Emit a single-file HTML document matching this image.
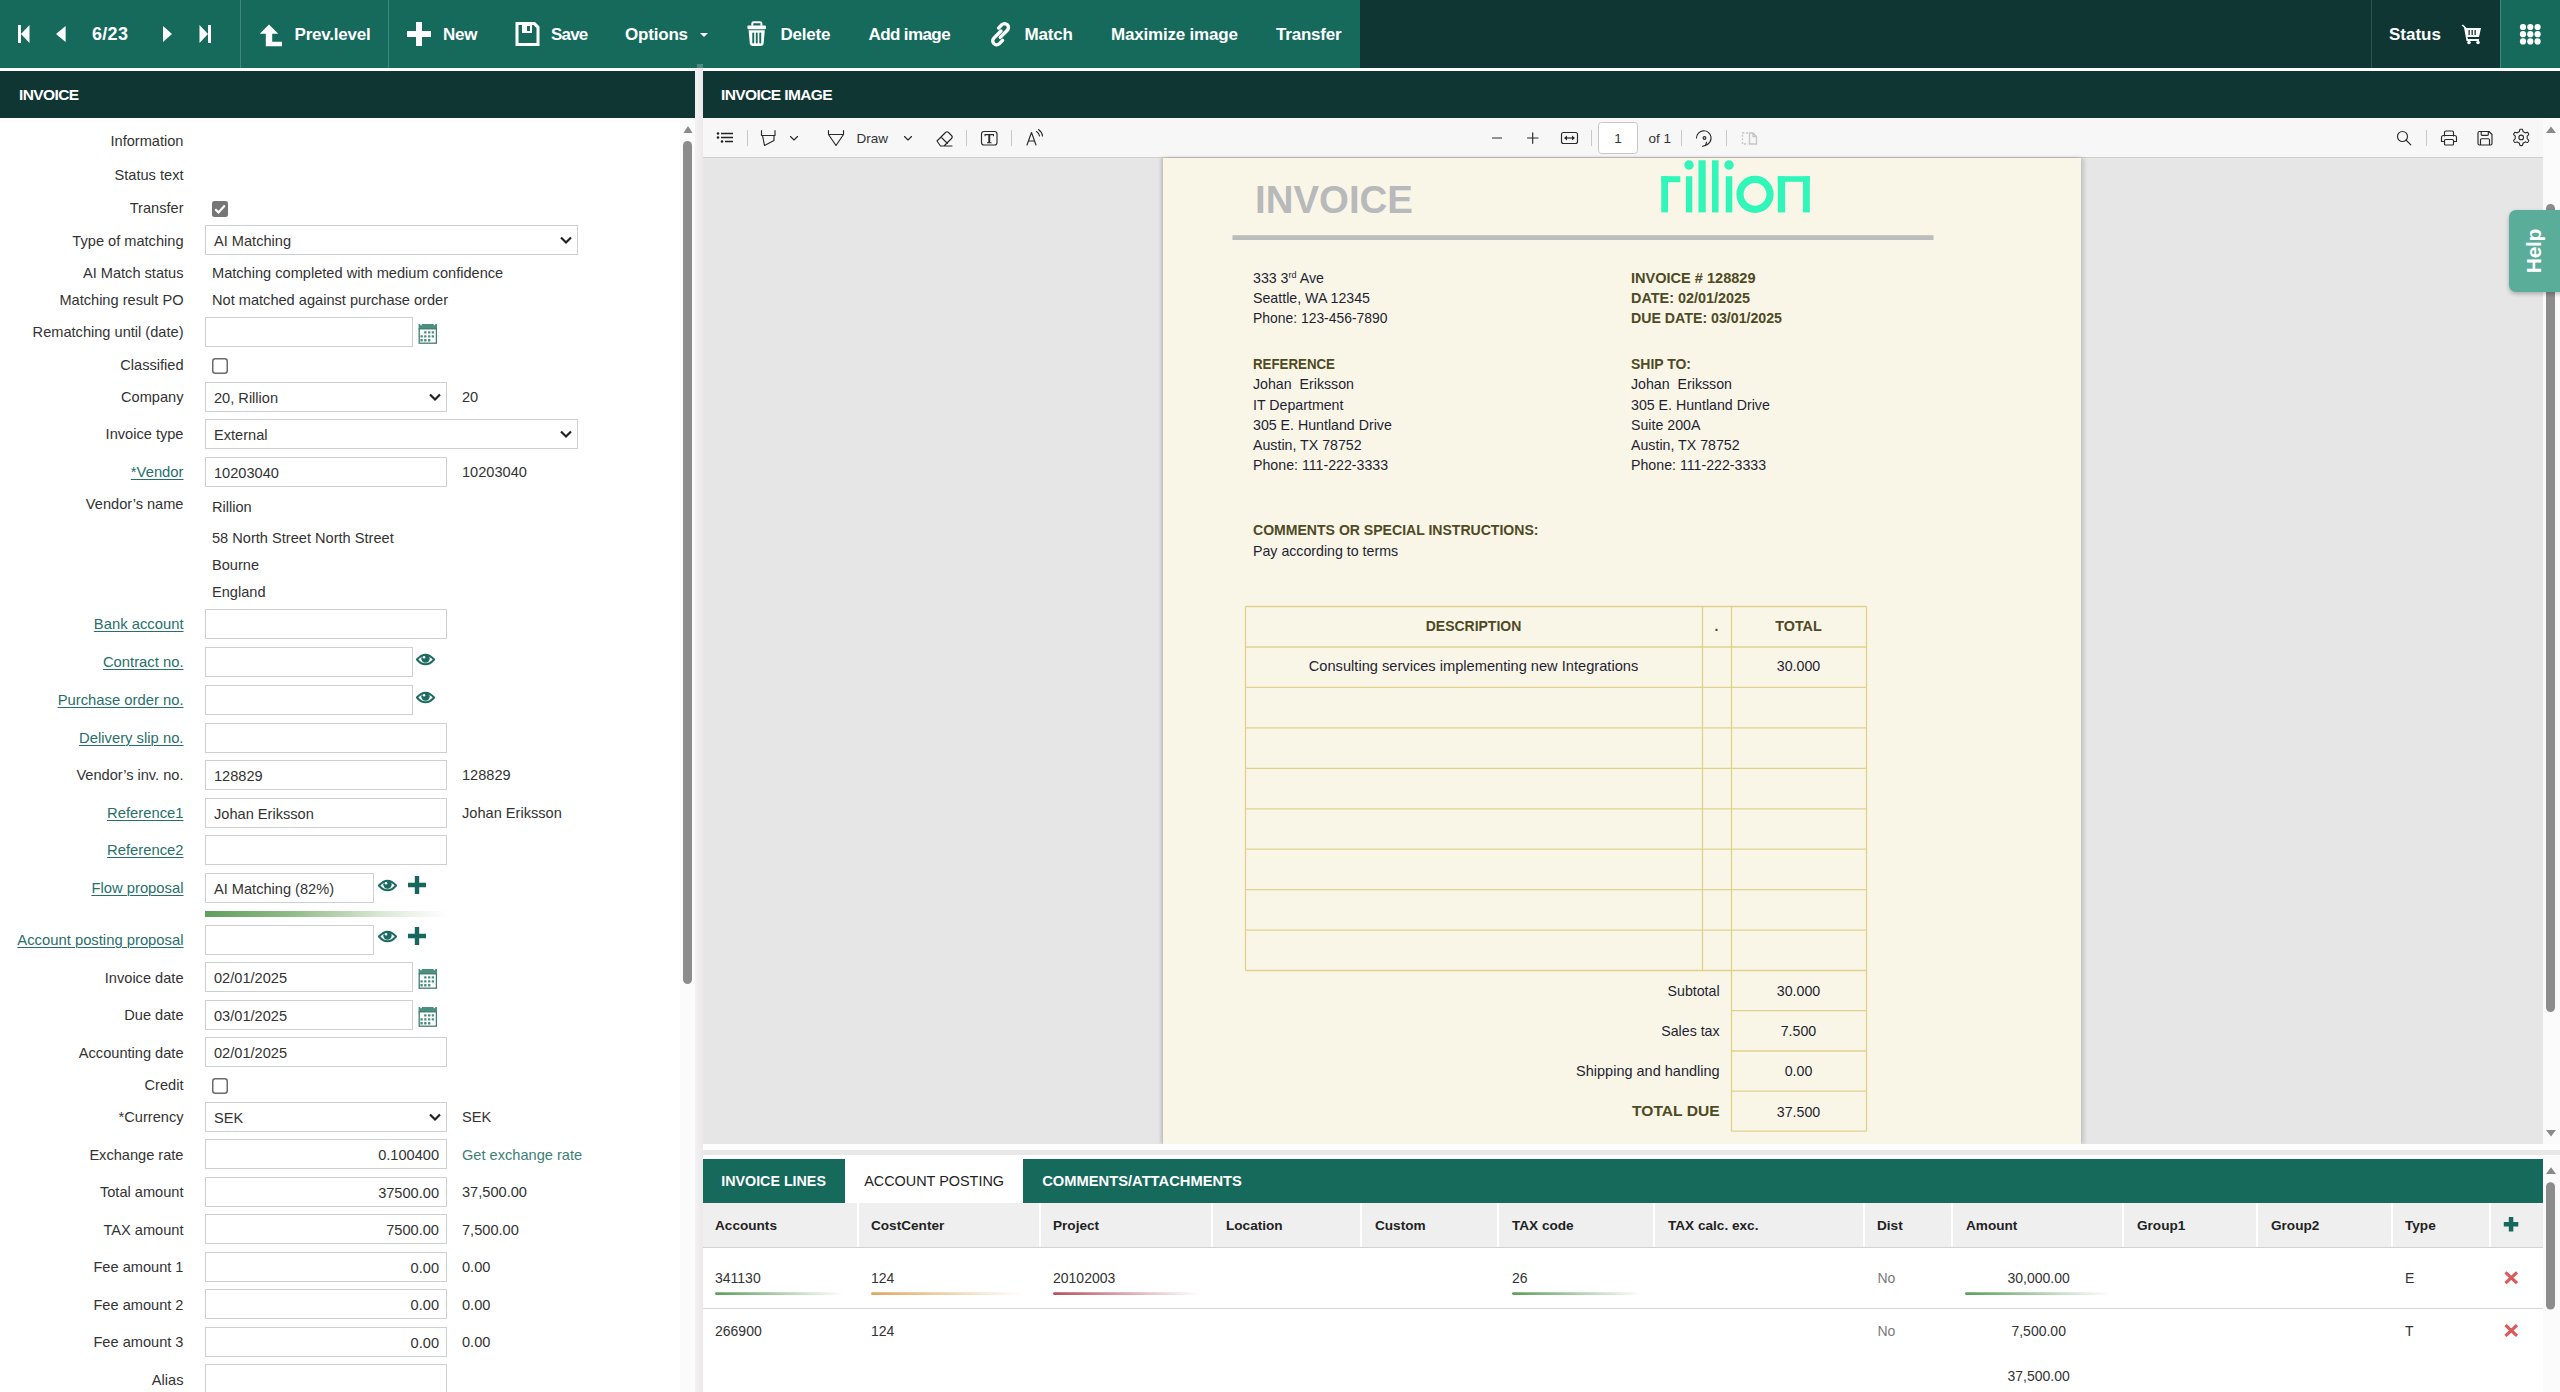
<!DOCTYPE html><html><head><meta charset="utf-8"><style>
*{box-sizing:border-box;margin:0;padding:0}
html,body{width:2560px;height:1392px;overflow:hidden;background:#fff;font-family:"Liberation Sans",sans-serif;color:#333}
.a{position:absolute}
.t{line-height:20px;white-space:nowrap}
.lk{text-decoration:underline;text-underline-offset:2px;text-decoration-thickness:1px}
.inp{background:#fff;border:1px solid #cdd0d2}
</style></head><body>
<div class="a" style="left:0px;top:0px;width:1360px;height:68px;background:#166a5c"></div>
<div class="a" style="left:1360px;top:0px;width:1200px;height:68px;background:#103634"></div>
<div class="a" style="left:2500px;top:0px;width:60px;height:68px;background:#166a5c"></div>
<!-- TOOLBAR -->
<svg class="a" style="left:0;top:0" width="1360" height="68" viewBox="0 0 1360 68">
<g fill="#fff">
<rect x="18" y="25" width="3" height="18"/><path d="M29.5 25 L21 34 L29.5 43Z"/>
<path d="M65.6 26 L56 34 L65.6 42Z"/>
<path d="M163 26 L172 34 L163 42Z"/>
<path d="M199.5 25 L208 34 L199.5 43Z"/><rect x="208" y="25" width="3" height="18"/>
<path d="M269 24.5 L259.8 33.8 L265.8 33.8 L265.8 46.2 L282 46.2 L282 41.8 L272.2 41.8 L272.2 33.8 L278.2 33.8Z"/>
<path d="M416 22 H422 V31 H431 V37 H422 V46 H416 V37 H407 V31 H416Z"/>
<path d="M515.5 22 H535 L539.5 26.5 V46 H515.5Z M518.5 25 V43 H536.5 V28 L533.5 25 H532 V33 H522 V25Z M527 26 H530 V31 H527Z" fill-rule="evenodd"/>
<path d="M700 33 H708 L704 37Z"/>
<path d="M752.3 25.8V23.6Q752.3 22.2 753.7 22.2H760Q761.4 22.2 761.4 23.6V25.8" fill="none" stroke="#fff" stroke-width="2"/>
<rect x="747.4" y="25.4" width="18.6" height="3.8" rx="1.2"/>
<path d="M748.6 30.2H764.8L763.6 43.6Q763.4 46 761 46H752.4Q750 46 749.8 43.6Z"/>
<g fill="#166a5c"><rect x="752.3" y="32.6" width="1.9" height="10.8" rx="0.9"/><rect x="755.8" y="32.6" width="1.9" height="10.8" rx="0.9"/><rect x="759.3" y="32.6" width="1.9" height="10.8" rx="0.9"/></g>
</g>
<g fill="none" stroke="#fff" stroke-width="3.4" stroke-linecap="round" transform="translate(1000.6 34.2) rotate(-45)">
<path d="M2.5 -2 H-7.5 A3.9 3.9 0 0 0 -7.5 5.8 H-3"/>
<path d="M-2.5 2 H7.5 A3.9 3.9 0 0 0 7.5 -5.8 H3"/>
</g>
<rect x="240" y="0" width="1" height="68" fill="#3f8a7d"/>
<rect x="388" y="0" width="1" height="68" fill="#3f8a7d"/>
<g fill="#fff" font-family="Liberation Sans" font-weight="bold" font-size="17" letter-spacing="-0.2">
<text x="92" y="39.8" font-size="18" letter-spacing="0.3">6/23</text>
<text x="294.5" y="39.8">Prev.level</text>
<text x="443" y="39.8">New</text>
<text x="551" y="39.8" letter-spacing="-0.8">Save</text>
<text x="625" y="39.8">Options</text>
<text x="780.5" y="39.8">Delete</text>
<text x="868.5" y="39.8" letter-spacing="-0.6">Add image</text>
<text x="1024.5" y="39.8">Match</text>
<text x="1111" y="39.8">Maximize image</text>
<text x="1276" y="39.8">Transfer</text>
</g>
</svg>
<svg class="a" style="left:2360px;top:0" width="200" height="68" viewBox="2360 0 200 68">
<rect x="2371" y="0" width="1" height="68" fill="#2a5550"/>
<rect x="2500" y="0" width="1" height="68" fill="#3f8a7d"/>
<text x="2389" y="39.8" fill="#fff" font-family="Liberation Sans" font-weight="bold" font-size="17">Status</text>
<g fill="#fff">
<path d="M2461.5 25.5 L2463 24.5 L2466.5 28 H2481 L2479 37 H2467.5 L2468 39 H2479 V41 H2466.5 L2464 27.5Z"/>
<circle cx="2469" cy="42.5" r="1.8"/><circle cx="2478" cy="42.5" r="1.8"/>
</g>
<g fill="#103634"><rect x="2468.5" y="30" width="1.3" height="5"/><rect x="2471.5" y="30" width="1.3" height="5"/><rect x="2474.5" y="30" width="1.3" height="5"/></g>
<g fill="#fff">
<circle cx="2523" cy="27" r="3.1"/><circle cx="2530.3" cy="27" r="3.1"/><circle cx="2537.6" cy="27" r="3.1"/>
<circle cx="2523" cy="34.2" r="3.1"/><circle cx="2530.3" cy="34.2" r="3.1"/><circle cx="2537.6" cy="34.2" r="3.1"/>
<circle cx="2523" cy="41.4" r="3.1"/><circle cx="2530.3" cy="41.4" r="3.1"/><circle cx="2537.6" cy="41.4" r="3.1"/>
</g>
</svg>

<div class="a" style="left:0px;top:68px;width:2560px;height:3px;background:#fff"></div>
<div class="a" style="left:0px;top:71px;width:695px;height:47px;background:#103634"></div>
<div class="a" style="left:695px;top:68px;width:8px;height:1324px;background:linear-gradient(90deg,#f2f2f4,#ebe8e8)"></div>
<div class="a" style="left:697px;top:64px;width:6px;height:4px;background:#4f8a80"></div>
<div class="a" style="left:703px;top:71px;width:1857px;height:47px;background:#103634"></div>
<div class="a t " style="left:19px;top:84.8px;font-size:15.5px;color:#fff;font-weight:bold;letter-spacing:-0.6px">INVOICE</div>
<div class="a t " style="left:721px;top:84.8px;font-size:15.5px;color:#fff;font-weight:bold;letter-spacing:-0.6px">INVOICE IMAGE</div>
<div class="a t " style="right:2376.5px;text-align:right;top:130.8px;font-size:14.6px;color:#333;font-weight:normal;">Information</div>
<div class="a t " style="right:2376.5px;text-align:right;top:165px;font-size:14.6px;color:#333;font-weight:normal;">Status text</div>
<div class="a t " style="right:2376.5px;text-align:right;top:198px;font-size:14.6px;color:#333;font-weight:normal;">Transfer</div>
<svg class="a" style="left:212px;top:201px" width="16" height="16" viewBox="0 0 16 16"><rect x="0" y="0" width="16" height="16" rx="2.5" fill="#767676"/><path d="M3.2 8.2 L6.5 11.4 L12.8 4.5" fill="none" stroke="#fff" stroke-width="2.2"/></svg>
<div class="a t " style="right:2376.5px;text-align:right;top:231px;font-size:14.6px;color:#333;font-weight:normal;">Type of matching</div>
<div class="a" style="left:205px;top:225px;width:373px;height:30px;background:#fff;border:1px solid #cdd0d2"></div>
<div class="a t " style="left:214px;top:231px;font-size:14.6px;color:#333;font-weight:normal;">AI Matching</div>
<svg class="a" style="left:559px;top:235px" width="14" height="10" viewBox="0 0 14 10"><path d="M2 2.5 L7 7.5 L12 2.5" fill="none" stroke="#222" stroke-width="2.2"/></svg>
<div class="a t " style="right:2376.5px;text-align:right;top:263px;font-size:14.6px;color:#333;font-weight:normal;">AI Match status</div>
<div class="a t " style="left:212px;top:263px;font-size:14.6px;color:#333;font-weight:normal;">Matching completed with medium confidence</div>
<div class="a t " style="right:2376.5px;text-align:right;top:290px;font-size:14.6px;color:#333;font-weight:normal;">Matching result PO</div>
<div class="a t " style="left:212px;top:290px;font-size:14.6px;color:#333;font-weight:normal;">Not matched against purchase order</div>
<div class="a t " style="right:2376.5px;text-align:right;top:322px;font-size:14.6px;color:#333;font-weight:normal;">Rematching until (date)</div>
<div class="a" style="left:205px;top:317px;width:208px;height:30px;background:#fff;border:1px solid #cdd0d2"></div>
<svg class="a" style="left:418px;top:324px" width="20" height="21" viewBox="0 0 20 21">
<rect x="0.6" y="0" width="18.4" height="5.6" fill="#4a8f7f"/><rect x="2.2" y="0" width="1.6" height="1.2" fill="#fff"/><rect x="15.6" y="0" width="1.6" height="1.2" fill="#fff"/>
<rect x="1.2" y="4.8" width="17.2" height="14.4" fill="#fff" stroke="#3f7d6e" stroke-width="1.3"/>
<g fill="#4a8f7f"><rect x="6.1" y="7.2" width="2.4" height="2.4" rx="0.5"/><rect x="10.0" y="7.2" width="2.4" height="2.4" rx="0.5"/><rect x="13.7" y="7.2" width="2.4" height="2.4" rx="0.5"/><rect x="2.4" y="11.2" width="2.4" height="2.4" rx="0.5"/><rect x="6.1" y="11.2" width="2.4" height="2.4" rx="0.5"/><rect x="10.0" y="11.2" width="2.4" height="2.4" rx="0.5"/><rect x="13.7" y="11.2" width="2.4" height="2.4" rx="0.5"/><rect x="2.4" y="15.0" width="2.4" height="2.4" rx="0.5"/><rect x="6.1" y="15.0" width="2.4" height="2.4" rx="0.5"/><rect x="10.0" y="15.0" width="2.4" height="2.4" rx="0.5"/></g>
</svg>
<div class="a t " style="right:2376.5px;text-align:right;top:355px;font-size:14.6px;color:#333;font-weight:normal;">Classified</div>
<svg class="a" style="left:212px;top:358px" width="16" height="16" viewBox="0 0 16 16"><rect x="0.75" y="0.75" width="14.5" height="14.5" rx="2.5" fill="#fff" stroke="#6a6a6a" stroke-width="1.5"/></svg>
<div class="a t " style="right:2376.5px;text-align:right;top:387px;font-size:14.6px;color:#333;font-weight:normal;">Company</div>
<div class="a" style="left:205px;top:382px;width:242px;height:30px;background:#fff;border:1px solid #cdd0d2"></div>
<div class="a t " style="left:214px;top:388px;font-size:14.6px;color:#333;font-weight:normal;">20, Rillion</div>
<svg class="a" style="left:428px;top:392px" width="14" height="10" viewBox="0 0 14 10"><path d="M2 2.5 L7 7.5 L12 2.5" fill="none" stroke="#222" stroke-width="2.2"/></svg>
<div class="a t " style="left:462px;top:387px;font-size:14.6px;color:#333;font-weight:normal;">20</div>
<div class="a t " style="right:2376.5px;text-align:right;top:424px;font-size:14.6px;color:#333;font-weight:normal;">Invoice type</div>
<div class="a" style="left:205px;top:419px;width:373px;height:30px;background:#fff;border:1px solid #cdd0d2"></div>
<div class="a t " style="left:214px;top:425px;font-size:14.6px;color:#333;font-weight:normal;">External</div>
<svg class="a" style="left:559px;top:429px" width="14" height="10" viewBox="0 0 14 10"><path d="M2 2.5 L7 7.5 L12 2.5" fill="none" stroke="#222" stroke-width="2.2"/></svg>
<div class="a t lk" style="right:2376.5px;text-align:right;top:462px;font-size:14.8px;color:#27706a;font-weight:normal;">*Vendor</div>
<div class="a" style="left:205px;top:457px;width:242px;height:30px;background:#fff;border:1px solid #cdd0d2"></div>
<div class="a t " style="left:214px;top:463px;font-size:14.6px;color:#333;font-weight:normal;">10203040</div>
<div class="a t " style="left:462px;top:462px;font-size:14.6px;color:#333;font-weight:normal;">10203040</div>
<div class="a t " style="right:2376.5px;text-align:right;top:494px;font-size:14.6px;color:#333;font-weight:normal;">Vendor’s name</div>
<div class="a t " style="left:212px;top:497px;font-size:14.6px;color:#333;font-weight:normal;">Rillion</div>
<div class="a t " style="left:212px;top:528px;font-size:14.6px;color:#333;font-weight:normal;">58 North Street North Street</div>
<div class="a t " style="left:212px;top:555px;font-size:14.6px;color:#333;font-weight:normal;">Bourne</div>
<div class="a t " style="left:212px;top:582px;font-size:14.6px;color:#333;font-weight:normal;">England</div>
<div class="a t lk" style="right:2376.5px;text-align:right;top:614px;font-size:14.8px;color:#27706a;font-weight:normal;">Bank account</div>
<div class="a" style="left:205px;top:609px;width:242px;height:30px;background:#fff;border:1px solid #cdd0d2"></div>
<div class="a t lk" style="right:2376.5px;text-align:right;top:652px;font-size:14.8px;color:#27706a;font-weight:normal;">Contract no.</div>
<div class="a" style="left:205px;top:647px;width:208px;height:30px;background:#fff;border:1px solid #cdd0d2"></div>
<svg class="a" style="left:416px;top:653px" width="19" height="13" viewBox="0 0 19 13">
<path d="M0.9 6.5 Q9.5 -3.2 18.1 6.5 Q9.5 16.2 0.9 6.5Z" fill="none" stroke="#1d6a62" stroke-width="2"/>
<circle cx="9.5" cy="5.6" r="4.2" fill="#1d6a62"/><circle cx="8" cy="4.3" r="1.3" fill="#fff"/>
</svg>
<div class="a t lk" style="right:2376.5px;text-align:right;top:690px;font-size:14.8px;color:#27706a;font-weight:normal;">Purchase order no.</div>
<div class="a" style="left:205px;top:685px;width:208px;height:30px;background:#fff;border:1px solid #cdd0d2"></div>
<svg class="a" style="left:416px;top:691px" width="19" height="13" viewBox="0 0 19 13">
<path d="M0.9 6.5 Q9.5 -3.2 18.1 6.5 Q9.5 16.2 0.9 6.5Z" fill="none" stroke="#1d6a62" stroke-width="2"/>
<circle cx="9.5" cy="5.6" r="4.2" fill="#1d6a62"/><circle cx="8" cy="4.3" r="1.3" fill="#fff"/>
</svg>
<div class="a t lk" style="right:2376.5px;text-align:right;top:728px;font-size:14.8px;color:#27706a;font-weight:normal;">Delivery slip no.</div>
<div class="a" style="left:205px;top:723px;width:242px;height:30px;background:#fff;border:1px solid #cdd0d2"></div>
<div class="a t " style="right:2376.5px;text-align:right;top:765px;font-size:14.6px;color:#333;font-weight:normal;">Vendor’s inv. no.</div>
<div class="a" style="left:205px;top:760px;width:242px;height:30px;background:#fff;border:1px solid #cdd0d2"></div>
<div class="a t " style="left:214px;top:766px;font-size:14.6px;color:#333;font-weight:normal;">128829</div>
<div class="a t " style="left:462px;top:765px;font-size:14.6px;color:#333;font-weight:normal;">128829</div>
<div class="a t lk" style="right:2376.5px;text-align:right;top:803px;font-size:14.8px;color:#27706a;font-weight:normal;">Reference1</div>
<div class="a" style="left:205px;top:798px;width:242px;height:30px;background:#fff;border:1px solid #cdd0d2"></div>
<div class="a t " style="left:214px;top:804px;font-size:14.6px;color:#333;font-weight:normal;">Johan Eriksson</div>
<div class="a t " style="left:462px;top:803px;font-size:14.6px;color:#333;font-weight:normal;">Johan Eriksson</div>
<div class="a t lk" style="right:2376.5px;text-align:right;top:840px;font-size:14.8px;color:#27706a;font-weight:normal;">Reference2</div>
<div class="a" style="left:205px;top:835px;width:242px;height:30px;background:#fff;border:1px solid #cdd0d2"></div>
<div class="a t lk" style="right:2376.5px;text-align:right;top:878px;font-size:14.8px;color:#27706a;font-weight:normal;">Flow proposal</div>
<div class="a" style="left:205px;top:873px;width:169px;height:30px;background:#fff;border:1px solid #cdd0d2"></div>
<div class="a t " style="left:214px;top:879px;font-size:14.6px;color:#333;font-weight:normal;">AI Matching (82%)</div>
<svg class="a" style="left:378px;top:879px" width="19" height="13" viewBox="0 0 19 13">
<path d="M0.9 6.5 Q9.5 -3.2 18.1 6.5 Q9.5 16.2 0.9 6.5Z" fill="none" stroke="#1d6a62" stroke-width="2"/>
<circle cx="9.5" cy="5.6" r="4.2" fill="#1d6a62"/><circle cx="8" cy="4.3" r="1.3" fill="#fff"/>
</svg>
<svg class="a" style="left:408px;top:876px" width="18" height="18" viewBox="0 0 18 18"><path d="M6.8 0H11.2V6.8H18V11.2H11.2V18H6.8V11.2H0V6.8H6.8Z" fill="#17675d"/></svg>
<div class="a" style="left:205px;top:911px;width:243px;height:6px;background:linear-gradient(90deg,#5f9f5c 0%,#8fbb86 35%,#dfeadb 75%,rgba(255,255,255,0) 100%)"></div>
<div class="a t lk" style="right:2376.5px;text-align:right;top:929.5px;font-size:14.8px;color:#27706a;font-weight:normal;">Account posting proposal</div>
<div class="a" style="left:205px;top:925px;width:169px;height:30px;background:#fff;border:1px solid #cdd0d2"></div>
<svg class="a" style="left:378px;top:930px" width="19" height="13" viewBox="0 0 19 13">
<path d="M0.9 6.5 Q9.5 -3.2 18.1 6.5 Q9.5 16.2 0.9 6.5Z" fill="none" stroke="#1d6a62" stroke-width="2"/>
<circle cx="9.5" cy="5.6" r="4.2" fill="#1d6a62"/><circle cx="8" cy="4.3" r="1.3" fill="#fff"/>
</svg>
<svg class="a" style="left:408px;top:927px" width="18" height="18" viewBox="0 0 18 18"><path d="M6.8 0H11.2V6.8H18V11.2H11.2V18H6.8V11.2H0V6.8H6.8Z" fill="#17675d"/></svg>
<div class="a t " style="right:2376.5px;text-align:right;top:968px;font-size:14.6px;color:#333;font-weight:normal;">Invoice date</div>
<div class="a" style="left:205px;top:962px;width:208px;height:30px;background:#fff;border:1px solid #cdd0d2"></div>
<div class="a t " style="left:214px;top:968px;font-size:14.6px;color:#333;font-weight:normal;">02/01/2025</div>
<svg class="a" style="left:418px;top:969px" width="20" height="21" viewBox="0 0 20 21">
<rect x="0.6" y="0" width="18.4" height="5.6" fill="#4a8f7f"/><rect x="2.2" y="0" width="1.6" height="1.2" fill="#fff"/><rect x="15.6" y="0" width="1.6" height="1.2" fill="#fff"/>
<rect x="1.2" y="4.8" width="17.2" height="14.4" fill="#fff" stroke="#3f7d6e" stroke-width="1.3"/>
<g fill="#4a8f7f"><rect x="6.1" y="7.2" width="2.4" height="2.4" rx="0.5"/><rect x="10.0" y="7.2" width="2.4" height="2.4" rx="0.5"/><rect x="13.7" y="7.2" width="2.4" height="2.4" rx="0.5"/><rect x="2.4" y="11.2" width="2.4" height="2.4" rx="0.5"/><rect x="6.1" y="11.2" width="2.4" height="2.4" rx="0.5"/><rect x="10.0" y="11.2" width="2.4" height="2.4" rx="0.5"/><rect x="13.7" y="11.2" width="2.4" height="2.4" rx="0.5"/><rect x="2.4" y="15.0" width="2.4" height="2.4" rx="0.5"/><rect x="6.1" y="15.0" width="2.4" height="2.4" rx="0.5"/><rect x="10.0" y="15.0" width="2.4" height="2.4" rx="0.5"/></g>
</svg>
<div class="a t " style="right:2376.5px;text-align:right;top:1005px;font-size:14.6px;color:#333;font-weight:normal;">Due date</div>
<div class="a" style="left:205px;top:1000px;width:208px;height:30px;background:#fff;border:1px solid #cdd0d2"></div>
<div class="a t " style="left:214px;top:1006px;font-size:14.6px;color:#333;font-weight:normal;">03/01/2025</div>
<svg class="a" style="left:418px;top:1007px" width="20" height="21" viewBox="0 0 20 21">
<rect x="0.6" y="0" width="18.4" height="5.6" fill="#4a8f7f"/><rect x="2.2" y="0" width="1.6" height="1.2" fill="#fff"/><rect x="15.6" y="0" width="1.6" height="1.2" fill="#fff"/>
<rect x="1.2" y="4.8" width="17.2" height="14.4" fill="#fff" stroke="#3f7d6e" stroke-width="1.3"/>
<g fill="#4a8f7f"><rect x="6.1" y="7.2" width="2.4" height="2.4" rx="0.5"/><rect x="10.0" y="7.2" width="2.4" height="2.4" rx="0.5"/><rect x="13.7" y="7.2" width="2.4" height="2.4" rx="0.5"/><rect x="2.4" y="11.2" width="2.4" height="2.4" rx="0.5"/><rect x="6.1" y="11.2" width="2.4" height="2.4" rx="0.5"/><rect x="10.0" y="11.2" width="2.4" height="2.4" rx="0.5"/><rect x="13.7" y="11.2" width="2.4" height="2.4" rx="0.5"/><rect x="2.4" y="15.0" width="2.4" height="2.4" rx="0.5"/><rect x="6.1" y="15.0" width="2.4" height="2.4" rx="0.5"/><rect x="10.0" y="15.0" width="2.4" height="2.4" rx="0.5"/></g>
</svg>
<div class="a t " style="right:2376.5px;text-align:right;top:1043px;font-size:14.6px;color:#333;font-weight:normal;">Accounting date</div>
<div class="a" style="left:205px;top:1037px;width:242px;height:30px;background:#fff;border:1px solid #cdd0d2"></div>
<div class="a t " style="left:214px;top:1043px;font-size:14.6px;color:#333;font-weight:normal;">02/01/2025</div>
<div class="a t " style="right:2376.5px;text-align:right;top:1075px;font-size:14.6px;color:#333;font-weight:normal;">Credit</div>
<svg class="a" style="left:212px;top:1078px" width="16" height="16" viewBox="0 0 16 16"><rect x="0.75" y="0.75" width="14.5" height="14.5" rx="2.5" fill="#fff" stroke="#6a6a6a" stroke-width="1.5"/></svg>
<div class="a t " style="right:2376.5px;text-align:right;top:1107px;font-size:14.6px;color:#333;font-weight:normal;">*Currency</div>
<div class="a" style="left:205px;top:1102px;width:242px;height:30px;background:#fff;border:1px solid #cdd0d2"></div>
<div class="a t " style="left:214px;top:1108px;font-size:14.6px;color:#333;font-weight:normal;">SEK</div>
<svg class="a" style="left:428px;top:1112px" width="14" height="10" viewBox="0 0 14 10"><path d="M2 2.5 L7 7.5 L12 2.5" fill="none" stroke="#222" stroke-width="2.2"/></svg>
<div class="a t " style="left:462px;top:1107px;font-size:14.6px;color:#333;font-weight:normal;">SEK</div>
<div class="a t " style="right:2376.5px;text-align:right;top:1144.5px;font-size:14.6px;color:#333;font-weight:normal;">Exchange rate</div>
<div class="a" style="left:205px;top:1139px;width:242px;height:30px;background:#fff;border:1px solid #cdd0d2"></div>
<div class="a t " style="right:2121px;text-align:right;top:1145px;font-size:14.6px;color:#333;font-weight:normal;">0.100400</div>
<div class="a t " style="left:462px;top:1145px;font-size:14.6px;color:#3d7f76;font-weight:normal;">Get exchange rate</div>
<div class="a t " style="right:2376.5px;text-align:right;top:1181.5px;font-size:14.6px;color:#333;font-weight:normal;">Total amount</div>
<div class="a" style="left:205px;top:1177px;width:242px;height:30px;background:#fff;border:1px solid #cdd0d2"></div>
<div class="a t " style="right:2121px;text-align:right;top:1183px;font-size:14.6px;color:#333;font-weight:normal;">37500.00</div>
<div class="a t " style="left:462px;top:1182px;font-size:14.6px;color:#333;font-weight:normal;">37,500.00</div>
<div class="a t " style="right:2376.5px;text-align:right;top:1219.5px;font-size:14.6px;color:#333;font-weight:normal;">TAX amount</div>
<div class="a" style="left:205px;top:1214px;width:242px;height:30px;background:#fff;border:1px solid #cdd0d2"></div>
<div class="a t " style="right:2121px;text-align:right;top:1220px;font-size:14.6px;color:#333;font-weight:normal;">7500.00</div>
<div class="a t " style="left:462px;top:1220px;font-size:14.6px;color:#333;font-weight:normal;">7,500.00</div>
<div class="a t " style="right:2376.5px;text-align:right;top:1257px;font-size:14.6px;color:#333;font-weight:normal;">Fee amount 1</div>
<div class="a" style="left:205px;top:1252px;width:242px;height:30px;background:#fff;border:1px solid #cdd0d2"></div>
<div class="a t " style="right:2121px;text-align:right;top:1258px;font-size:14.6px;color:#333;font-weight:normal;">0.00</div>
<div class="a t " style="left:462px;top:1257px;font-size:14.6px;color:#333;font-weight:normal;">0.00</div>
<div class="a t " style="right:2376.5px;text-align:right;top:1295px;font-size:14.6px;color:#333;font-weight:normal;">Fee amount 2</div>
<div class="a" style="left:205px;top:1289px;width:242px;height:30px;background:#fff;border:1px solid #cdd0d2"></div>
<div class="a t " style="right:2121px;text-align:right;top:1295px;font-size:14.6px;color:#333;font-weight:normal;">0.00</div>
<div class="a t " style="left:462px;top:1295px;font-size:14.6px;color:#333;font-weight:normal;">0.00</div>
<div class="a t " style="right:2376.5px;text-align:right;top:1331.5px;font-size:14.6px;color:#333;font-weight:normal;">Fee amount 3</div>
<div class="a" style="left:205px;top:1327px;width:242px;height:30px;background:#fff;border:1px solid #cdd0d2"></div>
<div class="a t " style="right:2121px;text-align:right;top:1333px;font-size:14.6px;color:#333;font-weight:normal;">0.00</div>
<div class="a t " style="left:462px;top:1332px;font-size:14.6px;color:#333;font-weight:normal;">0.00</div>
<div class="a t " style="right:2376.5px;text-align:right;top:1369.5px;font-size:14.6px;color:#333;font-weight:normal;">Alias</div>
<div class="a" style="left:205px;top:1364px;width:242px;height:30px;background:#fff;border:1px solid #cdd0d2"></div>
<div class="a" style="left:680px;top:118px;width:15px;height:1274px;background:#fbfbfb"></div>
<svg class="a" style="left:683px;top:125px" width="10" height="9" viewBox="0 0 10 9"><path d="M0.5 8 L5 1 L9.5 8Z" fill="#8a8a8a"/></svg>
<div class="a" style="left:683px;top:141px;width:9px;height:843px;background:#8c8c8c;border-radius:5px"></div>
<div class="a" style="left:703px;top:118px;width:1840px;height:40px;background:#f7f7f7;border-bottom:1px solid #d2cfcb"></div>
<div class="a" style="left:703px;top:158px;width:1840px;height:986px;background:#e6e6e6"></div>
<div class="a" style="left:1163px;top:158px;width:918px;height:986px;background:#f9f6e7;box-shadow:-2px 0 3px rgba(0,0,0,.18),3px 0 4px rgba(0,0,0,.15)"></div>
<svg class="a" style="left:703px;top:118px" width="1840" height="40" viewBox="703 118 1840 40">
<g fill="#222">
<circle cx="718" cy="133.5" r="1.3"/><circle cx="718" cy="137.5" r="1.3"/><circle cx="722" cy="141.5" r="1.3"/>
</g>
<g stroke="#222" stroke-width="1.4" fill="none">
<path d="M721 133.5H733M721 137.5H733M725 141.5H733"/>
</g>
<g fill="#c8c8c8">
<rect x="747" y="130" width="1" height="16"/><rect x="966" y="130" width="1" height="16"/><rect x="1011" y="130" width="1" height="16"/>
<rect x="1591" y="130" width="1" height="16"/><rect x="1681" y="130" width="1" height="16"/><rect x="1726" y="130" width="1" height="16"/>
<rect x="2426" y="130" width="1" height="16"/>
</g>
<g stroke="#2a2a2a" stroke-width="1.15" fill="none" stroke-linejoin="round" stroke-linecap="round">
<!-- highlighter -->
<path d="M761.5 130.5V135.5H775V130.5M762.5 135.5L764.5 145.5L774 140.5V135.5"/>
<!-- chevrons -->
<path d="M790.5 136.5L794 140L797.5 136.5"/>
<path d="M904.5 136.5L908 140L911.5 136.5"/>
<!-- draw pen -->
<path d="M828.5 130.5V134.5M843.5 130.5V134.5M828.5 134.5H843.5L836 145.5Z"/>
<!-- eraser -->
<path d="M937 141L945.5 132.5Q947 131 948.5 132.5L951.5 135.5Q953 137 951.5 138.5L944 146H940.5Z M941 137L947.5 143.5 M940.5 146H952"/>
<!-- T box -->
<rect x="981.5" y="131.5" width="15.5" height="13.5" rx="2.5"/>
<!-- A with waves -->
<path d="M1027 145L1031.5 132.5L1036 145M1028.5 141H1034.5"/>
<path d="M1036.5 131.5Q1039 133 1039.5 136M1038.5 129.5Q1042 132 1042.5 136"/>
<!-- plus -->
<path d="M1527.5 138H1538M1532.7 132.7V143.3"/>
<!-- fit width -->
<rect x="1561.5" y="132.5" width="16" height="11" rx="2"/>
<!-- rotate -->
<path d="M1696.5 138A7.3 7.3 0 1 1 1705.5 145.2"/>
<path d="M1706.5 142.2L1705.6 145.4L1702.6 146.3"/>
<circle cx="1704.5" cy="138" r="1.4"/>
<!-- search -->
<circle cx="2402.5" cy="136.5" r="5"/><path d="M2406 140L2410.8 144.8"/>
<!-- print -->
<path d="M2444.5 136V132.5Q2444.5 131 2446 131H2452Q2453.5 131 2453.5 132.5V136M2444 141.5H2441.5V137.5Q2441.5 135.5 2443.5 135.5H2454.5Q2456.5 135.5 2456.5 137.5V141.5H2454"/>
<rect x="2444.5" y="139.5" width="9" height="5.5" rx="1"/>
<!-- save -->
<path d="M2479.5 131.5H2489L2492 134.5V143.5Q2492 145 2490.5 145H2479.5Q2478 145 2478 143.5V133Q2478 131.5 2479.5 131.5Z M2481.2 131.5V134.5Q2481.2 135.3 2482 135.3H2487.5Q2488.3 135.3 2488.3 134.5V131.5 M2480.5 145V139.8Q2480.5 138.7 2481.6 138.7H2488.4Q2489.5 138.7 2489.5 139.8V145"/>
<!-- gear -->

</g>
<g fill="#2a2a2a">
<path d="M984.5 134H994V136.3H993V135.2H990.2V142.2H991.5V143.2H987V142.2H988.3V135.2H985.5V136.3H984.5Z"/>
<path d="M1564 138L1567 135.5V140.5Z M1575 138L1572 135.5V140.5Z"/><rect x="1566" y="137.4" width="7" height="1.2"/>
<path d="M1492 137.2H1502V138.8H1492Z" fill="#777"/>
</g>
<path d="M2521.20 129.20L2521.49 129.20L2521.77 129.22L2522.06 129.24L2522.34 129.28L2522.56 129.69L2522.73 130.19L2522.86 130.74L2522.95 131.29L2523.05 131.69L2523.25 131.76L2523.45 131.84L2523.64 131.92L2523.83 132.01L2524.02 132.10L2524.20 132.20L2524.38 132.31L2524.56 132.43L2524.73 132.55L2524.89 132.67L2525.06 132.80L2525.21 132.94L2525.61 132.83L2526.14 132.63L2526.67 132.47L2527.20 132.36L2527.66 132.35L2527.83 132.58L2528.00 132.81L2528.15 133.05L2528.30 133.30L2528.44 133.55L2528.57 133.81L2528.69 134.06L2528.80 134.33L2528.56 134.72L2528.21 135.12L2527.80 135.51L2527.37 135.86L2527.07 136.15L2527.11 136.36L2527.14 136.56L2527.17 136.77L2527.19 136.98L2527.20 137.19L2527.20 137.40L2527.20 137.61L2527.19 137.82L2527.17 138.03L2527.14 138.24L2527.11 138.44L2527.07 138.65L2527.37 138.94L2527.80 139.29L2528.21 139.68L2528.56 140.08L2528.80 140.47L2528.69 140.74L2528.57 140.99L2528.44 141.25L2528.30 141.50L2528.15 141.75L2528.00 141.99L2527.83 142.22L2527.66 142.45L2527.20 142.44L2526.67 142.33L2526.14 142.17L2525.61 141.97L2525.21 141.86L2525.06 142.00L2524.89 142.13L2524.73 142.25L2524.56 142.37L2524.38 142.49L2524.20 142.60L2524.02 142.70L2523.83 142.79L2523.64 142.88L2523.45 142.96L2523.25 143.04L2523.05 143.11L2522.95 143.51L2522.86 144.06L2522.73 144.61L2522.56 145.11L2522.34 145.52L2522.06 145.56L2521.77 145.58L2521.49 145.60L2521.20 145.60L2520.91 145.60L2520.63 145.58L2520.34 145.56L2520.06 145.52L2519.84 145.11L2519.67 144.61L2519.54 144.06L2519.45 143.51L2519.35 143.11L2519.15 143.04L2518.95 142.96L2518.76 142.88L2518.57 142.79L2518.38 142.70L2518.20 142.60L2518.02 142.49L2517.84 142.37L2517.67 142.25L2517.51 142.13L2517.34 142.00L2517.19 141.86L2516.79 141.97L2516.26 142.17L2515.73 142.33L2515.20 142.44L2514.74 142.45L2514.57 142.22L2514.40 141.99L2514.25 141.75L2514.10 141.50L2513.96 141.25L2513.83 140.99L2513.71 140.74L2513.60 140.47L2513.84 140.08L2514.19 139.68L2514.60 139.29L2515.03 138.94L2515.33 138.65L2515.29 138.44L2515.26 138.24L2515.23 138.03L2515.21 137.82L2515.20 137.61L2515.20 137.40L2515.20 137.19L2515.21 136.98L2515.23 136.77L2515.26 136.56L2515.29 136.36L2515.33 136.15L2515.03 135.86L2514.60 135.51L2514.19 135.12L2513.84 134.72L2513.60 134.33L2513.71 134.06L2513.83 133.81L2513.96 133.55L2514.10 133.30L2514.25 133.05L2514.40 132.81L2514.57 132.58L2514.74 132.35L2515.20 132.36L2515.73 132.47L2516.26 132.63L2516.79 132.83L2517.19 132.94L2517.34 132.80L2517.51 132.67L2517.67 132.55L2517.84 132.43L2518.02 132.31L2518.20 132.20L2518.38 132.10L2518.57 132.01L2518.76 131.92L2518.95 131.84L2519.15 131.76L2519.35 131.69L2519.45 131.29L2519.54 130.74L2519.67 130.19L2519.84 129.69L2520.06 129.28L2520.34 129.24L2520.63 129.22L2520.91 129.20L2521.20 129.20Z" fill="none" stroke="#2a2a2a" stroke-width="1.1" stroke-linejoin="round"/>
<circle cx="2521.2" cy="137.4" r="2.3" fill="none" stroke="#2a2a2a" stroke-width="1.1"/>
<!-- two page disabled -->
<g fill="none" stroke="#c4c4c4" stroke-width="1.3">
<path d="M1748 133H1742.5V144H1748" stroke-dasharray="2 1.6"/>
<path d="M1749.5 133H1753L1756.5 136.5V144H1749.5Z M1753 133V136.5H1756.5"/>
</g>
<!-- page input -->
<rect x="1598.5" y="122.5" width="39" height="31" rx="3" fill="#fff" stroke="#c6c6c6"/>
<g font-family="Liberation Sans" font-size="13.5" fill="#333">
<text x="856.5" y="143">Draw</text>
<text x="1618" y="143" text-anchor="middle">1</text>
<text x="1648.5" y="143">of 1</text>
</g>
</svg>

<svg class="a" style="left:1163px;top:158px" width="918" height="986" viewBox="1163 158 918 986">
<text x="1255" y="213" font-family="Liberation Sans" font-weight="bold" font-size="38" fill="#b8b9bb" textLength="158" lengthAdjust="spacingAndGlyphs">INVOICE</text>
<g fill="#30f6b9">
<rect x="1661.3" y="176.2" width="6.7" height="36.2"/><rect x="1661.3" y="176.2" width="19" height="6"/>
<circle cx="1689" cy="165" r="4.7"/><rect x="1685.9" y="176.2" width="6.4" height="36.2"/>
<rect x="1698.5" y="160.3" width="7.2" height="52.1"/><rect x="1712" y="160.3" width="6.5" height="52.1"/>
<circle cx="1729" cy="165" r="4.7"/><rect x="1725.7" y="176.2" width="6.6" height="36.2"/>
<rect x="1777.8" y="176.2" width="7.3" height="36.2"/><rect x="1803" y="176.2" width="6.8" height="36.2"/><rect x="1777.8" y="176.2" width="32" height="5.6"/>
</g>
<circle cx="1755" cy="194.3" r="15" fill="none" stroke="#30f6b9" stroke-width="7.2"/>
<rect x="1232.5" y="235.2" width="701" height="4.8" fill="#bcbcbc"/>
<g font-family="Liberation Sans">
<text x="1253" y="283" font-size="14.2" fill="#1f1f33">333 3<tspan dy="-5" font-size="9">rd</tspan><tspan dy="5"> Ave</tspan></text>
<text x="1253" y="303" font-size="14.2" fill="#1f1f33">Seattle, WA 12345</text>
<text x="1253" y="323" font-size="14.2" fill="#1f1f33" textLength="134.5" lengthAdjust="spacingAndGlyphs">Phone: 123-456-7890</text>
<text x="1631" y="283" font-size="14" fill="#4e4a24" font-weight="bold" textLength="124.5" lengthAdjust="spacingAndGlyphs">INVOICE # 128829</text>
<text x="1631" y="303" font-size="14" fill="#4e4a24" font-weight="bold" textLength="119" lengthAdjust="spacingAndGlyphs">DATE: 02/01/2025</text>
<text x="1631" y="323" font-size="14" fill="#4e4a24" font-weight="bold" textLength="151" lengthAdjust="spacingAndGlyphs">DUE DATE: 03/01/2025</text>
<text x="1253" y="369" font-size="14" fill="#4e4a24" font-weight="bold" textLength="82" lengthAdjust="spacingAndGlyphs">REFERENCE</text>
<text x="1631" y="369" font-size="14" fill="#4e4a24" font-weight="bold" textLength="60" lengthAdjust="spacingAndGlyphs">SHIP TO:</text>
<text x="1253" y="389" font-size="14.2" fill="#1f1f33">Johan&#160; Eriksson</text>
<text x="1631" y="389" font-size="14.2" fill="#1f1f33">Johan&#160; Eriksson</text>
<text x="1253" y="409.5" font-size="14.2" fill="#1f1f33">IT Department</text>
<text x="1631" y="409.5" font-size="14.2" fill="#1f1f33">305 E. Huntland Drive</text>
<text x="1253" y="429.5" font-size="14.2" fill="#1f1f33">305 E. Huntland Drive</text>
<text x="1631" y="429.5" font-size="14.2" fill="#1f1f33">Suite 200A</text>
<text x="1253" y="449.5" font-size="14.2" fill="#1f1f33">Austin, TX 78752</text>
<text x="1631" y="449.5" font-size="14.2" fill="#1f1f33">Austin, TX 78752</text>
<text x="1253" y="470" font-size="14.2" fill="#1f1f33">Phone: 111-222-3333</text>
<text x="1631" y="470" font-size="14.2" fill="#1f1f33">Phone: 111-222-3333</text>
<text x="1253" y="535" font-size="14" fill="#4e4a24" font-weight="bold" textLength="285.5" lengthAdjust="spacingAndGlyphs">COMMENTS OR SPECIAL INSTRUCTIONS:</text>
<text x="1253" y="555.5" font-size="14.2" fill="#1f1f33">Pay according to terms</text>
</g>
<g fill="none" stroke="#dfd38c" stroke-width="1.3">
<path d="M1245.5 606.5H1866.5"/>
<path d="M1245.5 647.0H1866.5"/>
<path d="M1245.5 687.4H1866.5"/>
<path d="M1245.5 727.9H1866.5"/>
<path d="M1245.5 768.3H1866.5"/>
<path d="M1245.5 808.8H1866.5"/>
<path d="M1245.5 849.2H1866.5"/>
<path d="M1245.5 889.7H1866.5"/>
<path d="M1245.5 930.1H1866.5"/>
<path d="M1245.5 970.5H1866.5"/>
<path d="M1245.5 606.5V970.5M1702.5 606.5V970.5M1731.5 606.5V1131.2M1866.5 606.5V1131.2"/>
<path d="M1731.5 1010.7H1866.5"/>
<path d="M1731.5 1051H1866.5"/>
<path d="M1731.5 1091.2H1866.5"/>
<path d="M1731.5 1131.2H1866.5"/>
</g>
<g font-family="Liberation Sans">
<text x="1473.5" y="631" font-size="14" fill="#4e4a24" font-weight="bold" text-anchor="middle" textLength="95.5" lengthAdjust="spacingAndGlyphs">DESCRIPTION</text>
<text x="1716.5" y="631" font-size="14" fill="#4e4a24" font-weight="bold" text-anchor="middle">.</text>
<text x="1798.5" y="631" font-size="14" fill="#4e4a24" font-weight="bold" text-anchor="middle" textLength="46.5" lengthAdjust="spacingAndGlyphs">TOTAL</text>
<text x="1473.5" y="671" font-size="14.2" fill="#1f1f33" text-anchor="middle" textLength="329.5" lengthAdjust="spacingAndGlyphs">Consulting services implementing new Integrations</text>
<text x="1798.5" y="671" font-size="14.2" fill="#1f1f33" text-anchor="middle">30.000</text>
<text x="1719.6" y="996" font-size="14.2" fill="#1f1f33" text-anchor="end">Subtotal</text>
<text x="1798.5" y="996" font-size="14.2" fill="#1f1f33" text-anchor="middle">30.000</text>
<text x="1719.6" y="1036" font-size="14.2" fill="#1f1f33" text-anchor="end">Sales tax</text>
<text x="1798.5" y="1036" font-size="14.2" fill="#1f1f33" text-anchor="middle">7.500</text>
<text x="1719.6" y="1076.3" font-size="14.2" fill="#1f1f33" text-anchor="end" textLength="143.5" lengthAdjust="spacingAndGlyphs">Shipping and handling</text>
<text x="1798.5" y="1076.3" font-size="14.2" fill="#1f1f33" text-anchor="middle">0.00</text>
<text x="1719.6" y="1116" font-size="15" fill="#4e4a24" font-weight="bold" text-anchor="end" textLength="87.5" lengthAdjust="spacingAndGlyphs">TOTAL DUE</text>
<text x="1798.5" y="1116.5" font-size="14.2" fill="#1f1f33" text-anchor="middle">37.500</text>
</g>
</svg>
<div class="a" style="left:2543px;top:118px;width:17px;height:1026px;background:#fbfbfb"></div>
<svg class="a" style="left:2546px;top:126px" width="10" height="8" viewBox="0 0 10 8"><path d="M0 7 L5 0.5 L10 7Z" fill="#8a8a8a"/></svg>
<div class="a" style="left:2546px;top:204px;width:9px;height:808px;background:#8c8c8c;border-radius:5px"></div>
<svg class="a" style="left:2546px;top:1129px" width="10" height="8" viewBox="0 0 10 8"><path d="M0 1 L5 7.5 L10 1Z" fill="#8a8a8a"/></svg>
<div class="a" style="left:2509px;top:210px;width:60px;height:82px;background:#5aad99;border-radius:7px;box-shadow:0 2px 4px rgba(0,0,0,.25)"></div>
<div class="a" style="left:2509px;top:210px;width:51px;height:82px;display:flex;align-items:center;justify-content:center"><div style="transform:rotate(-90deg);color:#fff;font-weight:bold;font-size:21px;line-height:22px;letter-spacing:-0.3px">Help</div></div>
<div class="a" style="left:703px;top:1144px;width:1857px;height:248px;background:#fff"></div>
<div class="a" style="left:703px;top:1150px;width:1857px;height:5px;background:#e8e8e8"></div>
<svg class="a" style="left:703px;top:1155px" width="1857" height="237" viewBox="703 1155 1857 237">
<defs>
<linearGradient id="gg" x1="0" x2="1" y1="0" y2="0"><stop offset="0" stop-color="#5d9e5a"/><stop offset="0.45" stop-color="#5d9e5a" stop-opacity="0.55"/><stop offset="1" stop-color="#5d9e5a" stop-opacity="0"/></linearGradient>
<linearGradient id="go" x1="0" x2="1" y1="0" y2="0"><stop offset="0" stop-color="#e0a65a"/><stop offset="0.45" stop-color="#e0a65a" stop-opacity="0.55"/><stop offset="1" stop-color="#e0a65a" stop-opacity="0"/></linearGradient>
<linearGradient id="gr" x1="0" x2="1" y1="0" y2="0"><stop offset="0" stop-color="#b5505e"/><stop offset="0.45" stop-color="#b5505e" stop-opacity="0.55"/><stop offset="1" stop-color="#b5505e" stop-opacity="0"/></linearGradient>
</defs>
<rect x="703" y="1159" width="1840" height="44" fill="#166a5c"/>
<rect x="845" y="1159" width="178" height="44" fill="#fff"/>
<rect x="703" y="1203" width="1840" height="44" fill="#efefef"/>
<rect x="703" y="1247" width="1840" height="1" fill="#d2d2d2"/>
<rect x="857" y="1203" width="2" height="44" fill="#fff"/>
<rect x="1039" y="1203" width="2" height="44" fill="#fff"/>
<rect x="1211" y="1203" width="2" height="44" fill="#fff"/>
<rect x="1360" y="1203" width="2" height="44" fill="#fff"/>
<rect x="1497" y="1203" width="2" height="44" fill="#fff"/>
<rect x="1653" y="1203" width="2" height="44" fill="#fff"/>
<rect x="1863" y="1203" width="2" height="44" fill="#fff"/>
<rect x="1951" y="1203" width="2" height="44" fill="#fff"/>
<rect x="2122" y="1203" width="2" height="44" fill="#fff"/>
<rect x="2256" y="1203" width="2" height="44" fill="#fff"/>
<rect x="2391" y="1203" width="2" height="44" fill="#fff"/>
<rect x="2489" y="1203" width="2" height="44" fill="#fff"/>
<rect x="703" y="1308" width="1840" height="1" fill="#d6d6d6"/>
<g font-family="Liberation Sans">
<text x="721.3" y="1186" font-size="14.5" font-weight="bold" fill="#fff" textLength="104.6" lengthAdjust="spacingAndGlyphs">INVOICE LINES</text>
<text x="864.2" y="1186" font-size="14.4" fill="#222" textLength="139.8" lengthAdjust="spacingAndGlyphs">ACCOUNT POSTING</text>
<text x="1042.2" y="1186" font-size="14.7" font-weight="bold" fill="#fff" textLength="199.7" lengthAdjust="spacingAndGlyphs">COMMENTS/ATTACHMENTS</text>
<text x="715" y="1230" font-size="13.6" font-weight="bold" fill="#222">Accounts</text>
<text x="871" y="1230" font-size="13.6" font-weight="bold" fill="#222">CostCenter</text>
<text x="1053" y="1230" font-size="13.6" font-weight="bold" fill="#222">Project</text>
<text x="1226" y="1230" font-size="13.6" font-weight="bold" fill="#222">Location</text>
<text x="1375" y="1230" font-size="13.6" font-weight="bold" fill="#222">Custom</text>
<text x="1512" y="1230" font-size="13.6" font-weight="bold" fill="#222">TAX code</text>
<text x="1668" y="1230" font-size="13.6" font-weight="bold" fill="#222">TAX calc. exc.</text>
<text x="1877" y="1230" font-size="13.6" font-weight="bold" fill="#222">Dist</text>
<text x="1966" y="1230" font-size="13.6" font-weight="bold" fill="#222">Amount</text>
<text x="2137" y="1230" font-size="13.6" font-weight="bold" fill="#222">Group1</text>
<text x="2271" y="1230" font-size="13.6" font-weight="bold" fill="#222">Group2</text>
<text x="2405" y="1230" font-size="13.6" font-weight="bold" fill="#222">Type</text>
<text x="715" y="1283" font-size="14" fill="#333">341130</text>
<text x="871" y="1283" font-size="14" fill="#333">124</text>
<text x="1053" y="1283" font-size="14" fill="#333">20102003</text>
<text x="1512" y="1283" font-size="14" fill="#333">26</text>
<text x="2405" y="1283" font-size="14" fill="#333">E</text>
<text x="715" y="1336" font-size="14" fill="#333">266900</text>
<text x="871" y="1336" font-size="14" fill="#333">124</text>
<text x="2405" y="1336" font-size="14" fill="#333">T</text>
<text x="1877.5" y="1283" font-size="14" fill="#7a7a7a">No</text>
<text x="1877.5" y="1336" font-size="14" fill="#7a7a7a">No</text>
<text x="2038.7" y="1283" font-size="14" fill="#333" text-anchor="middle">30,000.00</text>
<text x="2038.7" y="1336" font-size="14" fill="#333" text-anchor="middle">7,500.00</text>
<text x="2038.7" y="1381" font-size="14" fill="#333" text-anchor="middle">37,500.00</text>
</g>
<rect x="715" y="1292.2" width="128" height="2.8" rx="1.4" fill="url(#gg)"/>
<rect x="871" y="1292.2" width="152" height="2.8" rx="1.4" fill="url(#go)"/>
<rect x="1053" y="1292.2" width="146" height="2.8" rx="1.4" fill="url(#gr)"/>
<rect x="1512" y="1292.2" width="130" height="2.8" rx="1.4" fill="url(#gg)"/>
<rect x="1965" y="1292.2" width="145" height="2.8" rx="1.4" fill="url(#gg)"/>
<path d="M2508.8 1217H2513.3V1222H2518.3V1226.5H2513.3V1231.5H2508.8V1226.5H2503.8V1222H2508.8Z" fill="#17675b"/>
<path d="M2505.5 1272.3L2517 1283.1M2517 1272.3L2505.5 1283.1" stroke="#dc5a5a" stroke-width="3.2" stroke-linecap="butt"/>
<path d="M2505.5 1325.1L2517 1335.8999999999999M2517 1325.1L2505.5 1335.8999999999999" stroke="#dc5a5a" stroke-width="3.2" stroke-linecap="butt"/>
<rect x="2543" y="1155" width="17" height="237" fill="#fbfbfb"/>
<path d="M2546 1174L2551 1167.2L2556 1174Z" fill="#8a8a8a"/>
<rect x="2546" y="1182.3" width="9" height="127.2" rx="4.5" fill="#8c8c8c"/>
</svg>
</body></html>
